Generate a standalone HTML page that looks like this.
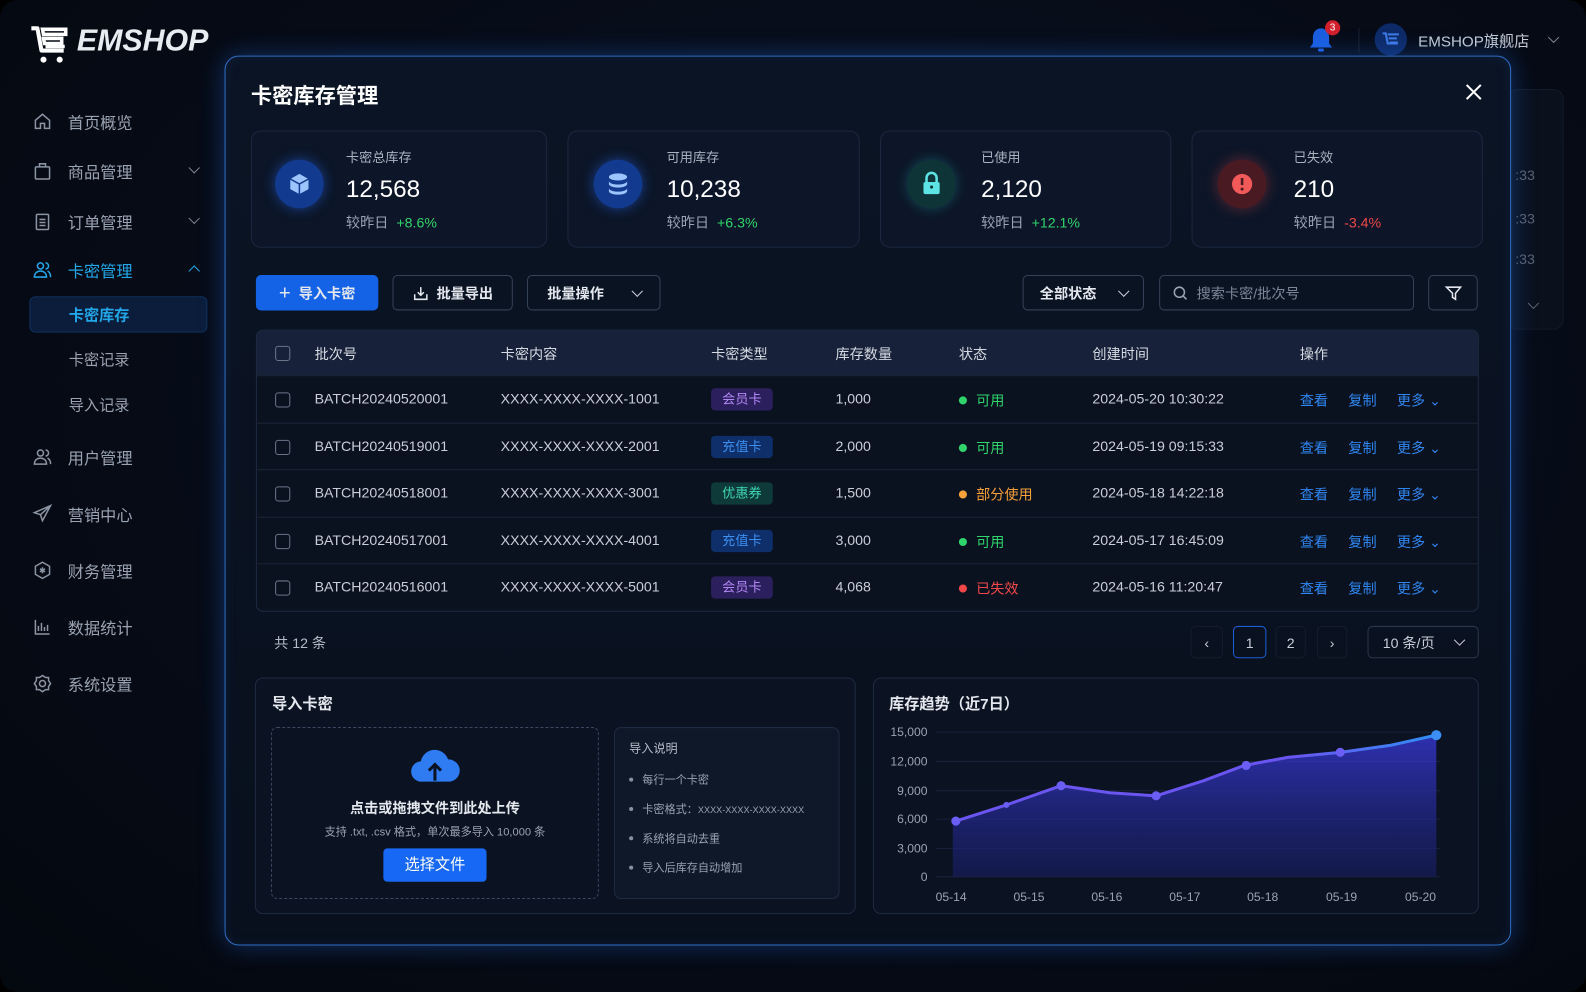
<!DOCTYPE html>
<html><head><meta charset="utf-8"><style>
*{box-sizing:border-box;margin:0;padding:0}
html,body{width:1586px;height:992px;overflow:hidden;background:#000}
body{font-family:"Liberation Sans","Noto Sans CJK SC",sans-serif;color:#dfe4ec}
#wrap{position:absolute;left:0;top:0;width:1568px;height:981px;transform:scale(1.01148,1.0112);transform-origin:0 0;background:radial-gradient(ellipse at 55% 40%,#0a1426 0%,#060b16 60%,#04080f 100%);border-radius:18px;overflow:hidden}
.a{position:absolute;white-space:nowrap}
.nav{position:absolute;left:32px;font-size:16px;color:#9aa3b2;display:flex;align-items:center;gap:15px}
.nav svg{width:20px;height:20px;stroke:#8b94a3;fill:none;stroke-width:1.5}
.chev{position:absolute;left:188px;width:8px;height:8px;border-right:1.5px solid #7c8595;border-bottom:1.5px solid #7c8595;transform:rotate(45deg)}
.modal{position:absolute;left:222px;top:55px;width:1272px;height:880px;border-radius:14px;border:1.5px solid #2f6fc4;background:linear-gradient(180deg,#0b1424,#08101d);box-shadow:0 0 24px rgba(40,120,255,.35),inset 0 0 12px rgba(40,120,255,.1)}
.card{position:absolute;top:129px;height:116px;border-radius:10px;background:#0c1628;border:1px solid #1b2840}
.ic{position:absolute;width:48px;height:48px;border-radius:50%;top:158px}
.lbl{position:absolute;font-size:13px;color:#aab2bf;top:145px}
.val{position:absolute;font-size:24px;color:#fff;top:174px}
.cmp{position:absolute;font-size:14px;color:#9aa3b2;top:210px}
.btn{position:absolute;top:272px;height:35px;border-radius:5px;border:1px solid #354256;font-size:14px;color:#e4e8ee;display:flex;align-items:center;justify-content:center;gap:8px;font-weight:bold}
.row{position:absolute;left:253px;width:1208px;height:47px;border-top:1px solid #1a2538;font-size:14px;color:#c9ced8}
.row span{position:absolute;top:14px}
.cb{position:absolute;left:19px;top:16px;width:15px;height:15px;border:1.5px solid #6b7588;border-radius:3px}
.tag{position:absolute;left:450px!important;top:12px!important;width:61px;height:22px;border-radius:4px;font-size:13px;text-align:center;line-height:22px}
.dot{position:absolute;left:695px;top:20px;width:8px;height:8px;border-radius:50%}
.op{color:#2f86f0}
.pg{position:absolute;top:619px;height:32px;border-radius:5px;font-size:14px;color:#c9ced8;text-align:center;line-height:32px}
.bul{position:absolute;left:622px;font-size:11px;color:#9aa3b2}
.bul:before{content:"";position:absolute;left:0;top:6px;width:4px;height:4px;border-radius:50%;background:#8891a0}
.yl{position:absolute;font-size:12px;color:#9aa3b2;text-align:right;width:50px;left:867px}
.xl{position:absolute;font-size:12px;color:#9aa3b2;top:880px}
</style></head><body><div id="wrap">

<svg class="a" style="left:28px;top:24px" width="42" height="42" viewBox="0 0 42 42"><path d="M3 4h6l4 22h22" fill="none" stroke="#fff" stroke-width="4" stroke-linejoin="round"/><path d="M14 5h23v5H15zM15 14h18v5H16zM17 22h19" fill="none" stroke="#fff" stroke-width="3.5"/><circle cx="15" cy="35" r="3" fill="#fff"/><circle cx="31" cy="35" r="3" fill="#fff"/></svg>
<div class="a" style="left:76px;top:24px;font-size:30px;font-weight:bold;font-style:italic;color:#e8ebf0">EMSHOP</div>

<svg class="a" style="left:1294px;top:26px" width="24" height="26" viewBox="0 0 24 26"><path d="M12 2c-5 0-8 4-8 9v6l-3 4h22l-3-4v-6c0-5-3-9-8-9z" fill="#1b5ee0"/><rect x="9" y="22" width="6" height="3" rx="1.5" fill="#1b5ee0"/></svg>
<div class="a" style="left:1310px;top:20px;width:15px;height:15px;border-radius:50%;background:#d11f2b;font-size:10px;color:#fff;text-align:center;line-height:15px">3</div>
<div class="a" style="left:1343px;top:28px;width:1px;height:24px;background:#1a2232"></div>
<div class="a" style="left:1359px;top:23px;width:32px;height:32px;border-radius:50%;background:#0d2a66"><svg width="32" height="32" viewBox="0 0 32 32"><path d="M8 10h3l2 10h10M13 11h11M14 15h8M15 19h8" stroke="#3f7be8" stroke-width="2" fill="none"/></svg></div>
<div class="a" style="left:1402px;top:30px;font-size:15px;color:#c5ccd6">EMSHOP旗舰店</div>
<div class="chev" style="left:1532px;top:33px"></div>
<div class="a" style="left:1490px;top:88px;width:56px;height:238px;border-radius:10px;background:#0a111d;border:1px solid #121b2a"></div>
<div class="a" style="left:1498px;top:165px;font-size:14px;color:#5a6272">:33</div>
<div class="a" style="left:1498px;top:208px;font-size:14px;color:#5a6272">:33</div>
<div class="a" style="left:1498px;top:248px;font-size:14px;color:#5a6272">:33</div>
<div class="chev" style="left:1512px;top:296px;border-color:#5a6272"></div>

<div class="nav" style="top:108px"><svg viewBox="0 0 20 20"><path d="M3 9l7-6 7 6v8h-5v-5H8v5H3z"/></svg>首页概览</div>
<div class="nav" style="top:157px"><svg viewBox="0 0 20 20"><rect x="3" y="6" width="14" height="12" rx="1"/><path d="M7 6V3h6v3"/></svg>商品管理</div><div class="chev" style="top:162px"></div>
<div class="nav" style="top:207px"><svg viewBox="0 0 20 20"><rect x="4" y="3" width="12" height="15" rx="1"/><path d="M7 8h6M7 11h6M7 14h6"/></svg>订单管理</div><div class="chev" style="top:212px"></div>
<div class="nav" style="top:255px;color:#22a6e8"><svg viewBox="0 0 20 20" style="stroke:#22a6e8"><circle cx="8" cy="6" r="3"/><path d="M2 17c0-4 3-6 6-6s6 2 6 6zM13 3a3 3 0 010 6M15 11c2 1 3 3 3 6"/></svg>卡密管理</div>
<div class="chev" style="top:264px;transform:rotate(-135deg);border-color:#22a6e8"></div>
<div class="a" style="left:29px;top:293px;width:176px;height:36px;border-radius:6px;background:#0b1d3a;border:1px solid #10305a"></div>
<div class="a" style="left:68px;top:301px;font-size:15px;color:#22a6e8;font-weight:bold">卡密库存</div>
<div class="a" style="left:68px;top:345px;font-size:15px;color:#9aa3b2">卡密记录</div>
<div class="a" style="left:68px;top:390px;font-size:15px;color:#9aa3b2">导入记录</div>
<div class="nav" style="top:440px"><svg viewBox="0 0 20 20"><circle cx="8" cy="6" r="3"/><path d="M2 17c0-4 3-6 6-6s6 2 6 6zM13 3a3 3 0 010 6M15 11c2 1 3 3 3 6"/></svg>用户管理</div>
<div class="nav" style="top:496px"><svg viewBox="0 0 20 20"><path d="M18 2L2 9l6 2 2 6zM8 11l10-9"/></svg>营销中心</div>
<div class="nav" style="top:552px"><svg viewBox="0 0 20 20"><path d="M10 2l7 4v8l-7 4-7-4V6z"/><path d="M10 7v6M7.5 8.5l5 3M12.5 8.5l-5 3"/></svg>财务管理</div>
<div class="nav" style="top:608px"><svg viewBox="0 0 20 20"><path d="M3 3v14h14M6 14V9M9 14V6M12 14v-4M15 14V8"/></svg>数据统计</div>
<div class="nav" style="top:664px"><svg viewBox="0 0 20 20"><path d="M10 2l3 2h3v3l2 3-2 3v3h-3l-3 2-3-2H4v-3l-2-3 2-3V4h3z"/><circle cx="10" cy="10" r="3"/></svg>系统设置</div>

<div class="modal"></div>
<div class="a" style="left:248px;top:79px;font-size:21px;font-weight:bold;color:#fff">卡密库存管理</div>
<svg class="a" style="left:1448px;top:82px" width="18" height="18" viewBox="0 0 18 18"><path d="M2 2l14 14M16 2L2 16" stroke="#fff" stroke-width="2"/></svg>

<div class="card" style="left:248px;width:293px"></div>
<div class="card" style="left:561px;width:289px"></div>
<div class="card" style="left:870px;width:288px"></div>
<div class="card" style="left:1178px;width:288px"></div>
<div class="ic" style="left:272px;background:#123a8e;box-shadow:0 0 12px rgba(40,110,255,.5)"><svg width="48" height="48" viewBox="0 0 48 48"><path d="M24 14l9 5v10l-9 5-9-5V19z" fill="#9cc4ff"/><path d="M15 19l9 5 9-5M24 24v10" stroke="#123a8e" stroke-width="1.5" fill="none"/></svg></div>
<div class="ic" style="left:587px;background:#123a8e;box-shadow:0 0 12px rgba(40,110,255,.5)"><svg width="48" height="48" viewBox="0 0 48 48"><ellipse cx="24" cy="17" rx="9" ry="3.5" fill="#9cc4ff"/><path d="M15 21c0 2 4 3.5 9 3.5s9-1.5 9-3.5v3c0 2-4 3.5-9 3.5s-9-1.5-9-3.5zM15 28c0 2 4 3.5 9 3.5s9-1.5 9-3.5v3c0 2-4 3.5-9 3.5s-9-1.5-9-3.5z" fill="#9cc4ff"/></svg></div>
<div class="ic" style="left:897px;background:#0f3438;box-shadow:0 0 12px rgba(40,200,200,.3)"><svg width="48" height="48" viewBox="0 0 48 48"><path d="M19 22v-4a5 5 0 0110 0v4" stroke="#5de3e3" stroke-width="2.5" fill="none"/><rect x="16" y="22" width="16" height="12" rx="2" fill="#5de3e3"/><circle cx="24" cy="27" r="1.5" fill="#0f3438"/></svg></div>
<div class="ic" style="left:1204px;background:#4a1a22;box-shadow:0 0 14px rgba(255,70,70,.35)"><svg width="48" height="48" viewBox="0 0 48 48"><circle cx="24" cy="24" r="10" fill="#f25a5a"/><path d="M24 18v7" stroke="#4a1a22" stroke-width="2.6"/><circle cx="24" cy="29" r="1.5" fill="#4a1a22"/></svg></div>
<div class="lbl" style="left:342px">卡密总库存</div><div class="val" style="left:342px">12,568</div><div class="cmp" style="left:342px">较昨日 <span style="color:#2fd46a;margin-left:4px">+8.6%</span></div>
<div class="lbl" style="left:659px">可用库存</div><div class="val" style="left:659px">10,238</div><div class="cmp" style="left:659px">较昨日 <span style="color:#2fd46a;margin-left:4px">+6.3%</span></div>
<div class="lbl" style="left:970px">已使用</div><div class="val" style="left:970px">2,120</div><div class="cmp" style="left:970px">较昨日 <span style="color:#2fd46a;margin-left:4px">+12.1%</span></div>
<div class="lbl" style="left:1279px">已失效</div><div class="val" style="left:1279px">210</div><div class="cmp" style="left:1279px">较昨日 <span style="color:#f04848;margin-left:4px">-3.4%</span></div>

<div class="btn" style="left:253px;width:121px;background:#1462e6;border-color:#1462e6"><span style="font-size:20px;font-weight:normal;line-height:1">+</span>导入卡密</div>
<div class="btn" style="left:388px;width:119px"><svg width="16" height="16" viewBox="0 0 16 16"><path d="M8 2v8M5 7l3 3 3-3M2 9v5h12V9" stroke="#e4e8ee" stroke-width="1.5" fill="none"/></svg>批量导出</div>
<div class="btn" style="left:521px;width:132px;justify-content:flex-start;padding-left:19px">批量操作</div><div class="chev" style="left:626px;top:284px;border-color:#ccd"></div>
<div class="btn" style="left:1011px;width:120px;justify-content:flex-start;padding-left:16px">全部状态</div><div class="chev" style="left:1107px;top:284px;border-color:#ccd"></div>
<div class="btn" style="left:1146px;width:252px;justify-content:flex-start;padding-left:12px;font-weight:normal;color:#7e8797"><svg width="16" height="16" viewBox="0 0 16 16"><circle cx="7" cy="7" r="5" stroke="#9aa3b2" stroke-width="1.5" fill="none"/><path d="M11 11l3 3" stroke="#9aa3b2" stroke-width="1.5"/></svg>搜索卡密/批次号</div>
<div class="btn" style="left:1412px;width:49px"><svg width="18" height="18" viewBox="0 0 18 18"><path d="M2 3h14l-5 6v6l-3-2V9z" stroke="#e4e8ee" stroke-width="1.5" fill="none"/></svg></div>

<div class="a" style="left:253px;top:326px;width:1209px;height:279px;border:1px solid #1f2b40;border-radius:7px;background:#0a1220"></div>
<div class="a" style="left:254px;top:327px;width:1207px;height:44px;background:#17223a;border-radius:6px 6px 0 0"></div>
<div class="row" style="top:326px;border:none;color:#d5dae2"><div class="cb"></div><span style="left:58px">批次号</span><span style="left:242px">卡密内容</span><span style="left:450px">卡密类型</span><span style="left:573px">库存数量</span><span style="left:695px">状态</span><span style="left:827px">创建时间</span><span style="left:1032px">操作</span></div>

<div class="row" style="top:371px"><div class="cb"></div><span style="left:58px">BATCH20240520001</span><span style="left:242px">XXXX-XXXX-XXXX-1001</span><span class="tag" style="background:#2c1f5e;color:#b287f5">会员卡</span><span style="left:573px">1,000</span><div class="dot" style="background:#2fd46a"></div><span style="left:712px;color:#2fd46a">可用</span><span style="left:827px">2024-05-20 10:30:22</span><span class="op" style="left:1032px">查看</span><span class="op" style="left:1080px">复制</span><span class="op" style="left:1128px">更多 ⌄</span></div>
<div class="row" style="top:418px"><div class="cb"></div><span style="left:58px">BATCH20240519001</span><span style="left:242px">XXXX-XXXX-XXXX-2001</span><span class="tag" style="background:#0e2f6a;color:#3d8ff0">充值卡</span><span style="left:573px">2,000</span><div class="dot" style="background:#2fd46a"></div><span style="left:712px;color:#2fd46a">可用</span><span style="left:827px">2024-05-19 09:15:33</span><span class="op" style="left:1032px">查看</span><span class="op" style="left:1080px">复制</span><span class="op" style="left:1128px">更多 ⌄</span></div>
<div class="row" style="top:464px"><div class="cb"></div><span style="left:58px">BATCH20240518001</span><span style="left:242px">XXXX-XXXX-XXXX-3001</span><span class="tag" style="background:#0f3a3a;color:#3fd9b6">优惠券</span><span style="left:573px">1,500</span><div class="dot" style="background:#f5a03a"></div><span style="left:712px;color:#f5a03a">部分使用</span><span style="left:827px">2024-05-18 14:22:18</span><span class="op" style="left:1032px">查看</span><span class="op" style="left:1080px">复制</span><span class="op" style="left:1128px">更多 ⌄</span></div>
<div class="row" style="top:511px"><div class="cb"></div><span style="left:58px">BATCH20240517001</span><span style="left:242px">XXXX-XXXX-XXXX-4001</span><span class="tag" style="background:#0e2f6a;color:#3d8ff0">充值卡</span><span style="left:573px">3,000</span><div class="dot" style="background:#2fd46a"></div><span style="left:712px;color:#2fd46a">可用</span><span style="left:827px">2024-05-17 16:45:09</span><span class="op" style="left:1032px">查看</span><span class="op" style="left:1080px">复制</span><span class="op" style="left:1128px">更多 ⌄</span></div>
<div class="row" style="top:557px"><div class="cb"></div><span style="left:58px">BATCH20240516001</span><span style="left:242px">XXXX-XXXX-XXXX-5001</span><span class="tag" style="background:#2c1f5e;color:#b287f5">会员卡</span><span style="left:573px">4,068</span><div class="dot" style="background:#f04848"></div><span style="left:712px;color:#f04848">已失效</span><span style="left:827px">2024-05-16 11:20:47</span><span class="op" style="left:1032px">查看</span><span class="op" style="left:1080px">复制</span><span class="op" style="left:1128px">更多 ⌄</span></div>

<div class="a" style="left:271px;top:626px;font-size:14px;color:#b5bcc7">共 12 条</div>
<div class="pg" style="left:1177px;width:32px;border:1px solid #141d2c">‹</div>
<div class="pg" style="left:1219px;width:33px;border:1.5px solid #1c5ed6">1</div>
<div class="pg" style="left:1261px;width:30px;border:1px solid #141d2c">2</div>
<div class="pg" style="left:1302px;width:30px;border:1px solid #141d2c">›</div>
<div class="pg" style="left:1352px;width:110px;border:1px solid #2b3648;text-align:left;padding-left:14px">10 条/页</div><div class="chev" style="left:1439px;top:629px;border-color:#ccd"></div>

<div class="a" style="left:252px;top:670px;width:594px;height:234px;border-radius:8px;border:1px solid #1f2b40;background:#0b1322"></div>
<div class="a" style="left:269px;top:685px;font-size:15px;font-weight:bold;color:#e4e8ee">导入卡密</div>
<div class="a" style="left:268px;top:719px;width:324px;height:170px;border:1.5px dashed #3b4860;border-radius:6px"></div>
<svg class="a" style="left:405px;top:737px" width="50" height="40" viewBox="0 0 50 40"><path d="M12 36a10 10 0 01-1-20 14 14 0 0127-2 10 10 0 011 22z" fill="#2f7bf2"/><path d="M25 35V20M19 25l6-6 6 6" stroke="#0b1322" stroke-width="3" fill="none"/></svg>
<div class="a" style="left:268px;top:789px;width:324px;text-align:center;font-size:14px;font-weight:bold;color:#e4e8ee">点击或拖拽文件到此处上传</div>
<div class="a" style="left:268px;top:814px;width:324px;text-align:center;font-size:11px;color:#9aa3b2">支持 .txt, .csv 格式，单次最多导入 10,000 条</div>
<div class="a" style="left:379px;top:839px;width:102px;height:33px;border-radius:4px;background:#1769f5;color:#fff;font-size:15px;text-align:center;line-height:33px">选择文件</div>
<div class="a" style="left:607px;top:719px;width:223px;height:170px;border-radius:7px;border:1px solid #1f2b40;background:#0e1828"></div>
<div class="a" style="left:622px;top:731px;font-size:12px;color:#b5bcc7">导入说明</div>
<div class="bul" style="top:763px"><span style="margin-left:13px">每行一个卡密</span></div>
<div class="bul" style="top:792px"><span style="margin-left:13px">卡密格式：<span style="font-size:9px">XXXX-XXXX-XXXX-XXXX</span></span></div>
<div class="bul" style="top:821px"><span style="margin-left:13px">系统将自动去重</span></div>
<div class="bul" style="top:850px"><span style="margin-left:13px">导入后库存自动增加</span></div>

<div class="a" style="left:863px;top:670px;width:599px;height:234px;border-radius:8px;border:1px solid #1f2b40;background:#0b1322"></div>
<div class="a" style="left:879px;top:685px;font-size:15px;font-weight:bold;color:#e4e8ee">库存趋势（近7日）</div>
<div class="yl" style="top:717px">15,000</div><div class="yl" style="top:746px">12,000</div><div class="yl" style="top:775px">9,000</div><div class="yl" style="top:803px">6,000</div><div class="yl" style="top:832px">3,000</div><div class="yl" style="top:860px">0</div>
<div class="xl" style="left:925px">05-14</div><div class="xl" style="left:1002px">05-15</div><div class="xl" style="left:1079px">05-16</div><div class="xl" style="left:1156px">05-17</div><div class="xl" style="left:1233px">05-18</div><div class="xl" style="left:1311px">05-19</div><div class="xl" style="left:1389px">05-20</div>
<svg class="a" style="left:0;top:0" width="1568" height="981">
<defs><linearGradient id="g" x1="0" y1="0" x2="0" y2="1"><stop offset="0" stop-color="#3a3adf" stop-opacity=".75"/><stop offset="1" stop-color="#1a2070" stop-opacity=".5"/></linearGradient><linearGradient id="l" x1="0" x2="1"><stop offset="0" stop-color="#6a55f0"/><stop offset=".7" stop-color="#6a55f0"/><stop offset="1" stop-color="#2f8ff5"/></linearGradient></defs>
<g stroke="#17223a" stroke-width="1"><path d="M925 724H1424M925 753H1424M925 782H1424M925 810H1424M925 839H1424M925 867H1424"/></g>
<path d="M942 813L995 796L1049 777L1097 784L1143 787L1190 772L1230 757L1273 749L1325 744L1375 737L1420 727V867H942Z" fill="url(#g)"/>
<path d="M942 813L995 796L1049 777L1097 784L1143 787L1190 772L1230 757L1273 749L1325 744L1375 737L1420 727" fill="none" stroke="url(#l)" stroke-width="3"/>
<g fill="#6b5ef5"><circle cx="945" cy="812" r="4.5"/><circle cx="995" cy="796" r="3"/><circle cx="1049" cy="777" r="4.5"/><circle cx="1143" cy="787" r="4.5"/><circle cx="1232" cy="757" r="4.5"/><circle cx="1325" cy="744" r="4.5"/></g><circle cx="1420" cy="727" r="5" fill="#3b8ff5"/>
</svg>
</div></body></html>
